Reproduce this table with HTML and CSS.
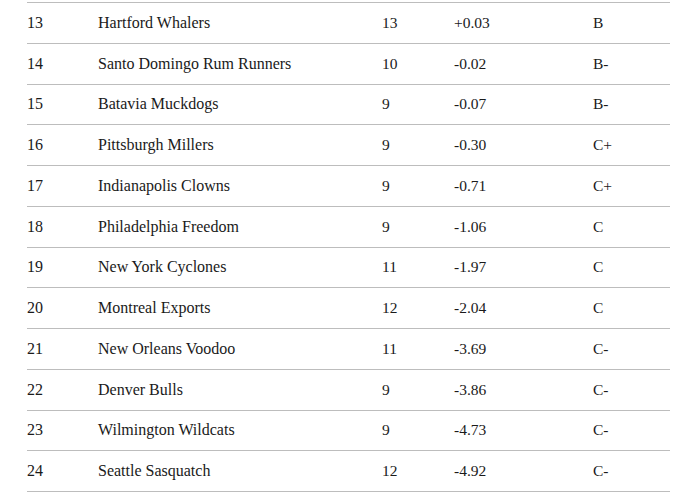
FILE: index.html
```html
<!DOCTYPE html>
<html>
<head>
<meta charset="utf-8">
<link rel="stylesheet" href="styles.css">
</head>
<body>
<div class="table">
  <div class="row"><span class="rank">13</span><span class="team">Hartford Whalers</span><span class="num">13</span><span class="num">+0.03</span><span class="num">B</span></div>
  <div class="row"><span class="rank">14</span><span class="team">Santo Domingo Rum Runners</span><span class="num">10</span><span class="num">-0.02</span><span class="num">B-</span></div>
  <div class="row"><span class="rank">15</span><span class="team">Batavia Muckdogs</span><span class="num">9</span><span class="num">-0.07</span><span class="num">B-</span></div>
  <div class="row"><span class="rank">16</span><span class="team">Pittsburgh Millers</span><span class="num">9</span><span class="num">-0.30</span><span class="num">C+</span></div>
  <div class="row"><span class="rank">17</span><span class="team">Indianapolis Clowns</span><span class="num">9</span><span class="num">-0.71</span><span class="num">C+</span></div>
  <div class="row"><span class="rank">18</span><span class="team">Philadelphia Freedom</span><span class="num">9</span><span class="num">-1.06</span><span class="num">C</span></div>
  <div class="row"><span class="rank">19</span><span class="team">New York Cyclones</span><span class="num">11</span><span class="num">-1.97</span><span class="num">C</span></div>
  <div class="row"><span class="rank">20</span><span class="team">Montreal Exports</span><span class="num">12</span><span class="num">-2.04</span><span class="num">C</span></div>
  <div class="row"><span class="rank">21</span><span class="team">New Orleans Voodoo</span><span class="num">11</span><span class="num">-3.69</span><span class="num">C-</span></div>
  <div class="row"><span class="rank">22</span><span class="team">Denver Bulls</span><span class="num">9</span><span class="num">-3.86</span><span class="num">C-</span></div>
  <div class="row"><span class="rank">23</span><span class="team">Wilmington Wildcats</span><span class="num">9</span><span class="num">-4.73</span><span class="num">C-</span></div>
  <div class="row"><span class="rank">24</span><span class="team">Seattle Sasquatch</span><span class="num">12</span><span class="num">-4.92</span><span class="num">C-</span></div>
</div>
</body>
</html>
```
FILE: styles.css
```css
html, body {
  margin: 0;
  padding: 0;
  background: #ffffff;
}
body {
  color: #1a1a1a;
  font-family: "Liberation Serif", serif;
}
.table {
  margin: 2px 6px 0 27px;
  width: 643px;
  border-bottom: 1px solid #bdbdbd;
}
.row {
  display: grid;
  grid-template-columns: 71px 284px 72px 139px 77px;
  align-items: center;
  height: 39.75px;
  border-top: 1px solid #bdbdbd;
}
.rank, .team {
  font-size: 16px;
}
.num {
  font-size: 15.5px;
}
```
